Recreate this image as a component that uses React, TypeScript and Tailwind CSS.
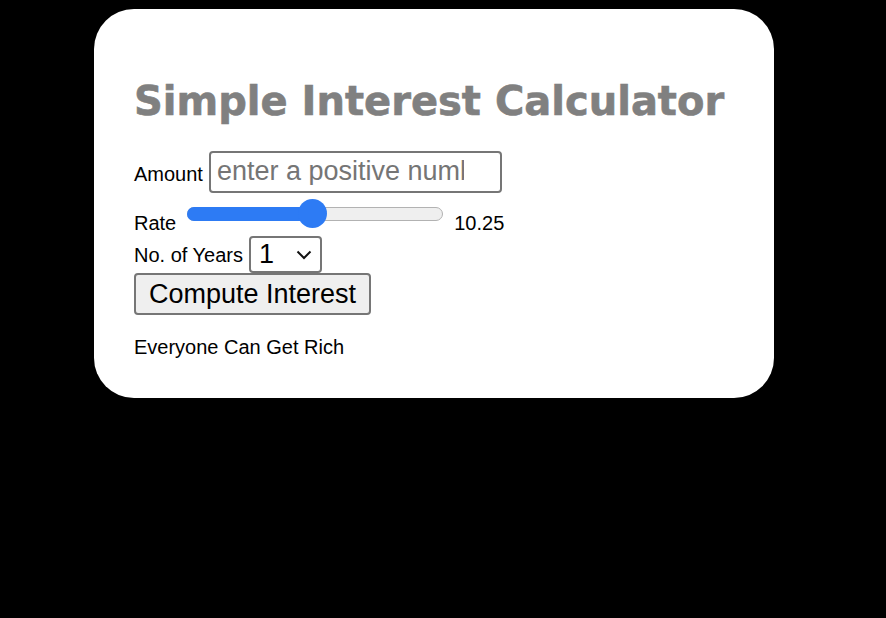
export default function App() {
  return (
    <div className="min-h-screen w-full bg-black pt-[9px] pl-[94px]" style={{ minHeight: 618 }}>
      <div className="w-[680px] h-[389px] bg-white rounded-[40px] px-[40px] pt-[68px] font-['Liberation_Sans',Arial,sans-serif] text-black">
        <h1 className="font-['DejaVu_Sans',Verdana,sans-serif] font-bold text-[40px] leading-[48px] text-[#808080] [-webkit-text-stroke:0.6px_#808080] whitespace-nowrap">
          Simple Interest Calculator
        </h1>

        <div className="mt-[26px] flex items-end text-[20px] leading-[23px]">
          <span className="mb-[7px]">Amount</span>
          <div className="ml-[6px] w-[293px] h-[42px] border-2 border-[#767676] rounded-[4px] flex items-center pl-[6px]">
            <div className="w-[247px] overflow-hidden">
              <span className="text-[27px] text-[#757575] whitespace-nowrap">enter a positive number</span>
            </div>
          </div>
        </div>

        <div className="mt-[6px] flex items-end text-[20px] leading-[23px]">
          <span>Rate</span>
          <div className="relative ml-[11px] w-[256px] h-[30px] mb-[6px]">
            <div className="absolute left-0 right-0 top-[8px] h-[14px] rounded-full bg-[#efefef] border border-[#b2b2b2]" />
            <div className="absolute left-0 top-[8px] h-[14px] w-[130px] rounded-full bg-[#2d7bf4]" />
            <div className="absolute left-[111px] top-0 w-[29px] h-[29px] rounded-full bg-[#2d7bf4]" />
          </div>
          <span className="ml-[11px]">10.25</span>
        </div>

        <div className="mt-[1px] flex items-end text-[20px] leading-[23px]">
          <span className="mb-[6px]">No. of Years</span>
          <div className="ml-[6px] w-[73px] h-[37px] border-2 border-[#767676] rounded-[4px] flex items-center justify-between pl-[8px] pr-[8px]">
            <span className="text-[27px] leading-none">1</span>
            <svg width="16" height="10" viewBox="0 0 16 10" fill="none" stroke="#111" strokeWidth="2">
              <path d="M1.5 1.5 L8 8 L14.5 1.5" />
            </svg>
          </div>
        </div>

        <div>
          <div className="inline-flex items-center justify-center w-[237px] h-[42px] bg-[#efefef] border-2 border-[#767676] rounded-[4px] text-[27px]">
            Compute Interest
          </div>
        </div>

        <p className="mt-[21px] text-[20px] leading-[23px]">Everyone Can Get Rich</p>
      </div>
    </div>
  );
}
